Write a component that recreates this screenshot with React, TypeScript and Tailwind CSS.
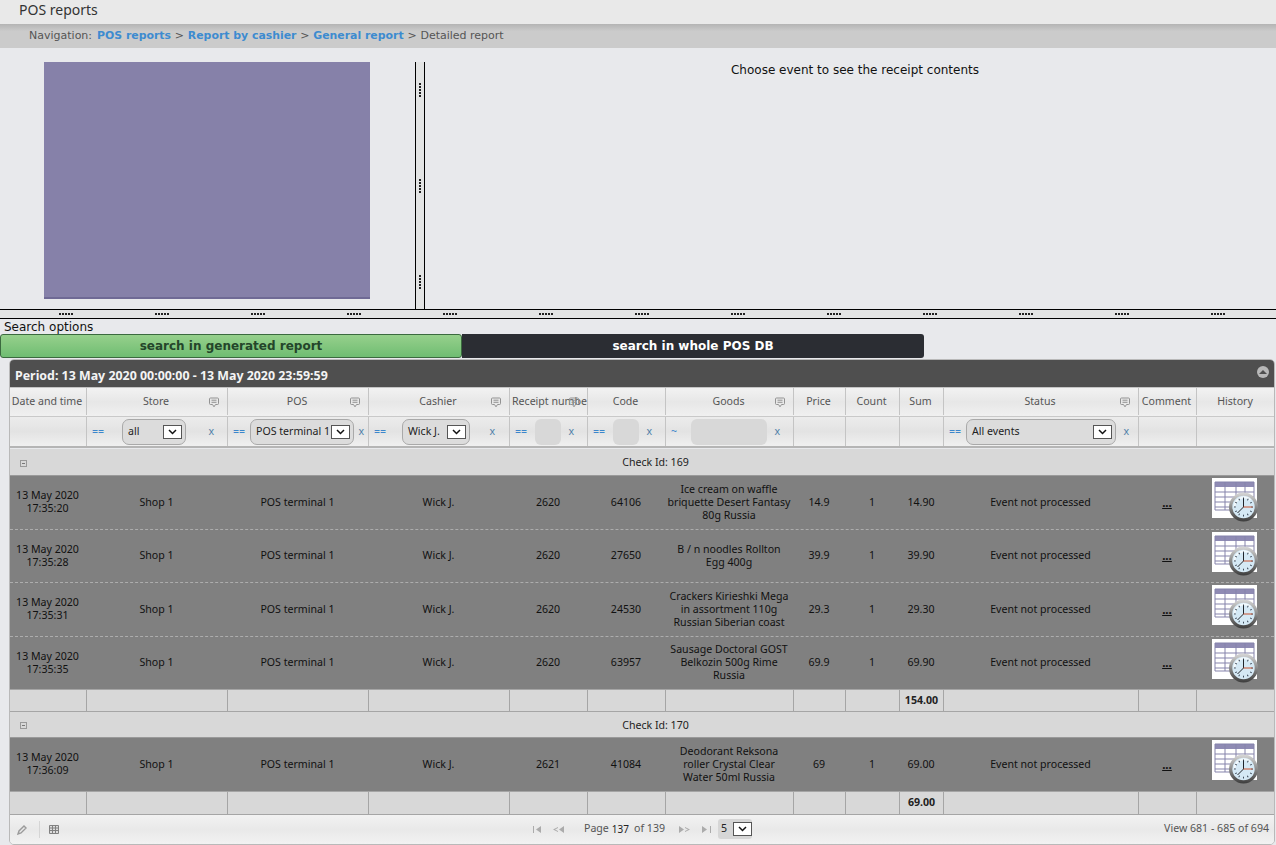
import type { ReactNode } from "react";

const gridCols =
  "grid grid-cols-[77px_141px_141px_141px_78px_78px_128px_52px_54px_44px_195px_58px_78px]";

const tableFont = "font-['Noto_Sans','DejaVu_Sans',sans-serif] text-[10.6px]";

const columns = [
  { title: "Date and time" },
  { title: "Store", note: true },
  { title: "POS", note: true },
  { title: "Cashier", note: true },
  { title: "Receipt number", note: true, clipped: true },
  { title: "Code" },
  { title: "Goods", note: true },
  { title: "Price" },
  { title: "Count" },
  { title: "Sum" },
  { title: "Status", note: true },
  { title: "Comment" },
  { title: "History" },
];

const checks = [
  {
    id: 169,
    total: "154.00",
    groupHeight: "h-[27px]",
    totalHeight: "h-[22px]",
    rows: [
      {
        time: "17:35:20",
        receipt: "2620",
        code: "64106",
        goods: ["Ice cream on waffle", "briquette Desert Fantasy", "80g Russia"],
        price: "14.9",
        sum: "14.90",
      },
      {
        time: "17:35:28",
        receipt: "2620",
        code: "27650",
        goods: ["B / n noodles Rollton", "Egg 400g"],
        price: "39.9",
        sum: "39.90",
      },
      {
        time: "17:35:31",
        receipt: "2620",
        code: "24530",
        goods: ["Crackers Kirieshki Mega", "in assortment 110g", "Russian Siberian coast"],
        price: "29.3",
        sum: "29.30",
      },
      {
        time: "17:35:35",
        receipt: "2620",
        code: "63957",
        goods: ["Sausage Doctoral GOST", "Belkozin 500g Rime", "Russia"],
        price: "69.9",
        sum: "69.90",
      },
    ],
  },
  {
    id: 170,
    total: "69.00",
    groupHeight: "h-[26px]",
    totalHeight: "h-[23px]",
    rows: [
      {
        time: "17:36:09",
        receipt: "2621",
        code: "41084",
        goods: ["Deodorant Reksona", "roller Crystal Clear", "Water 50ml Russia"],
        price: "69",
        sum: "69.00",
      },
    ],
  },
];

function NoteIcon() {
  return (
    <svg width="10" height="11" viewBox="0 0 10 11" fill="none" stroke="#929292" strokeWidth="1">
      <path d="M1.500 1h7a1 1 0 0 1 1 1v4.500a1 1 0 0 1-1 1H6.500L5 9.800 3.500 7.500h-2a1 1 0 0 1-1-1V2a1 1 0 0 1 1-1z" />
      <path d="M2.500 3.200h5M2.500 5.300h5" />
    </svg>
  );
}

function HistoryIcon() {
  const ticks = [0, 30, 60, 90, 120, 150, 180, 210, 240, 270, 300, 330];
  return (
    <svg width="48" height="44" viewBox="0 0 48 44">
      <defs>
        <linearGradient id="clockRing" x1="0" y1="0" x2="0" y2="1">
          <stop offset="0" stopColor="#d8d8d8" />
          <stop offset="1" stopColor="#3c3c3c" />
        </linearGradient>
      </defs>
      <rect x="0" y="0" width="45" height="40" fill="#ffffff" />
      <rect x="3" y="4" width="39" height="5" fill="#8f8bb4" />
      <path
        d="M3 4h39v28H3zM3 14h39M3 19h39M3 24h39M3 29h39M13 4v28M24 4v28M33 4v28"
        fill="none"
        stroke="#8583ab"
        strokeWidth="1"
      />
      <circle cx="31.500" cy="29" r="14.500" fill="url(#clockRing)" />
      <circle cx="31.500" cy="29" r="11.200" fill="#d5e9f5" />
      <path d="M22.500 29a9.500 9.500 0 0 1 16-7" fill="none" stroke="#ffffff" strokeWidth="2" opacity="0.7" />
      {ticks.map((a) => (
        <rect key={a} x="31.100" y="19.500" width="0.9" height="1.800" fill="#2e3a4a" transform={`rotate(${a} 31.500 29)`} />
      ))}
      <path d="M31.500 29V20.500M31.500 29l-6 6" stroke="#20242a" strokeWidth="1" fill="none" />
      <path d="M31.500 29h9" stroke="#c8502e" strokeWidth="1" fill="none" />
    </svg>
  );
}

function SelectBox() {
  return (
    <span className="flex h-[14px] w-[19px] shrink-0 items-center justify-center border border-[#555] bg-white">
      <svg width="9" height="6" viewBox="0 0 9 6" fill="none" stroke="#111" strokeWidth="1.500">
        <path d="M1 1l3.500 3.500L8 1" />
      </svg>
    </span>
  );
}

function Pill({ className, label }: { className: string; label: string }) {
  return (
    <span
      className={`flex h-[26px] items-center justify-between whitespace-nowrap rounded-[7px] border border-[#a9a9a9] bg-[#dcdcdc] pl-[5px] pr-[3px] text-[#222] ${className}`}
    >
      {label}
      <SelectBox />
    </span>
  );
}

function Blank({ className }: { className: string }) {
  return <span className={`h-[26px] rounded-[6px] bg-[#d8d8d8] ${className}`} />;
}

function FilterCell({ op = "==", gap, xRight, children }: { op?: string; gap: string; xRight: string; children: ReactNode }) {
  return (
    <div className="flex h-full items-center border-r border-[#c4c4c4] pl-[5px]">
      <span className="w-[11px] text-[#3c86cc]">{op}</span>
      <span className={`flex ${gap}`}>{children}</span>
      <span className={`ml-auto text-[#4f7fa8] ${xRight}`}>x</span>
    </div>
  );
}

function CollapseIcon() {
  return (
    <span className="flex h-[7px] w-[7px] items-center justify-center border border-[#999]">
      <span className="h-px w-[3px] bg-[#777]" />
    </span>
  );
}

function GroupRow({ id, height }: { id: number; height: string }) {
  return (
    <div className={`flex ${height} items-center border-b border-[#9a9a9a] bg-[#d8d8d8] pl-[10px] pt-[2px] text-[#222]`}>
      <CollapseIcon />
      <span className="flex-1 pl-[10px] text-center">Check Id: {id}</span>
    </div>
  );
}

function TotalRow({ total, height }: { total: string; height: string }) {
  return (
    <div className={`${gridCols} ${height} border-b border-[#a5a5a5] bg-[#d8d8d8]`}>
      {columns.map((c) => (
        <div
          key={c.title}
          className="flex items-center justify-center border-r border-[#a5a5a5] font-bold text-[#222] last:border-r-0"
        >
          {c.title === "Sum" ? total : ""}
        </div>
      ))}
    </div>
  );
}

function DataRow({
  row,
  lastRow,
}: {
  row: (typeof checks)[number]["rows"][number];
  lastRow: boolean;
}) {
  const cell = "flex items-center justify-center pr-[2px] text-center";
  const line = lastRow ? "border-solid border-[#a5a5a5]" : "border-dashed border-[#adadad]";
  return (
    <div className={`${gridCols} h-[53.5px] border-b ${line} bg-[#808080] leading-[13px] text-[#111]`}>
      <div className={cell}>
        13 May 2020
        <br />
        {row.time}
      </div>
      <div className={cell}>Shop 1</div>
      <div className={cell}>POS terminal 1</div>
      <div className={cell}>Wick J.</div>
      <div className={cell}>{row.receipt}</div>
      <div className={cell}>{row.code}</div>
      <div className="flex flex-col justify-center pr-[2px] text-center">
        {row.goods.map((text) => (
          <span key={text}>{text}</span>
        ))}
      </div>
      <div className={cell}>{row.price}</div>
      <div className={cell}>1</div>
      <div className={cell}>{row.sum}</div>
      <div className={cell}>Event not processed</div>
      <div className={`${cell} text-[11.5px] font-bold underline`}>...</div>
      <div className="pl-[15px] pt-[2px]">
        <HistoryIcon />
      </div>
    </div>
  );
}

function Dots({ vertical }: { vertical?: boolean }) {
  return (
    <span className={vertical ? "flex flex-col gap-px" : "flex gap-px"}>
      {[0, 1, 2, 3, 4].map((i) => (
        <span key={i} className="h-[2px] w-[2px] bg-[#222]" />
      ))}
    </span>
  );
}

export default function App() {
  return (
    <div className="h-[845px] w-[1276px] overflow-hidden bg-[#e8e9ec] font-['DejaVu_Sans',sans-serif] text-[11px]">
      <div className="h-[24px] bg-[#e9e9e9] pl-[19px] font-['Noto_Sans',sans-serif] text-[14px] leading-[19px] text-[#333]">
        POS reports
      </div>
      <div className="flex h-[24px] items-center gap-[3.8px] bg-gradient-to-b from-[#b4b4b4] to-[#cbcbcb] to-30% pl-[29px] text-[#555]">
        <span className="mr-[1.2px]">Navigation:</span>
        <span className="text-[10.9px] font-bold text-[#3d8bd0]">POS reports</span>
        <span>&gt;</span>
        <span className="text-[10.9px] font-bold text-[#3d8bd0]">Report by cashier</span>
        <span>&gt;</span>
        <span className="text-[10.9px] font-bold text-[#3d8bd0]">General report</span>
        <span>&gt;</span>
        <span>Detailed report</span>
      </div>

      <div className="flex h-[261px] pt-[14px]">
        <div className="w-[415px] pl-[44px]">
          <div className="h-[237px] w-[326px] border-b-2 border-[#6f6a95] bg-[#8681a9]" />
        </div>
        <div className="flex h-[247px] w-[10px] flex-col items-center gap-[82px] border-x border-black bg-[#e3e4e4] pt-[21px]">
          <Dots vertical />
          <Dots vertical />
          <Dots vertical />
        </div>
        <div className="flex-1 pl-[9px] pt-px text-center text-[12px] leading-[15px] text-[#111]">
          Choose event to see the receipt contents
        </div>
      </div>

      <div className="flex h-[10px] items-center border-y border-black bg-[#e3e4e4] pl-[18px]">
        {Array.from({ length: 13 }, (_, i) => (
          <span key={i} className="flex w-[96px] justify-center">
            <Dots />
          </span>
        ))}
      </div>

      <div className="h-[15px] pl-[4px] pt-px text-[12px] leading-[15px] text-[#111]">Search options</div>

      <div className="flex h-[24px] w-[924px] text-[12px] font-bold">
        <div className="flex w-[462px] items-center justify-center rounded-[3px] border border-[#3b6a3f] bg-gradient-to-b from-[#96d08c] to-[#6fbd72] text-[#24452a]">
          search in generated report
        </div>
        <div className="flex flex-1 items-center justify-center rounded-r-[3px] bg-[#2b2d33] text-white">
          search in whole POS DB
        </div>
      </div>

      <div className={`ml-[9px] mt-[1px] w-[1266px] overflow-hidden rounded-[5px] border border-[#b9b9b9] ${tableFont}`}>
        <div className="flex h-[27px] items-center justify-between bg-[#4f4f4f] pl-[5px] pr-[5px] text-[12.4px] font-bold text-[#f4f4f4]">
          <span className="pt-[5px]">Period: 13 May 2020 00:00:00 - 13 May 2020 23:59:59</span>
          <span className="mb-[3px] flex h-[12px] w-[12px] items-center justify-center rounded-full bg-[#b8b8b8]">
            <span className="border-x-[4px] border-b-[4px] border-x-transparent border-b-[#4f4f4f]" />
          </span>
        </div>

        <div className={`${gridCols} h-[29px] border-t border-[#c4c4c4] bg-gradient-to-b from-[#f2f2f2] via-[#e7e7e7] to-[#f0f0f0] pb-px text-[#555]`}>
          {columns.map((c) => (
            <div key={c.title} className="relative flex items-center justify-center overflow-hidden whitespace-nowrap border-r border-[#c4c4c4] pr-[2px] last:border-r-0">
              {c.clipped ? <span className="absolute left-[2px]">{c.title}</span> : c.title}
              {c.note && (
                <span className="absolute right-[8px] top-[9px]">
                  <NoteIcon />
                </span>
              )}
            </div>
          ))}
        </div>

        <div className={`${gridCols} h-[32px] border-y border-[#c9c9c9] border-b-[2px] border-b-[#b5b5b5] bg-gradient-to-b from-[#ececec] via-[#e3e3e3] to-[#f0f0f0]`}>
          <div className="border-r border-[#c4c4c4]" />
          <FilterCell gap="ml-[19px]" xRight="mr-[13px]">
            <Pill className="w-[64px]" label="all" />
          </FilterCell>
          <FilterCell gap="ml-[6px]" xRight="mr-[4px]">
            <Pill className="w-[104px]" label="POS terminal 1" />
          </FilterCell>
          <FilterCell gap="ml-[17px]" xRight="mr-[14px]">
            <Pill className="w-[68px]" label="Wick J." />
          </FilterCell>
          <FilterCell gap="ml-[9px]" xRight="mr-[13px]">
            <Blank className="w-[26px]" />
          </FilterCell>
          <FilterCell gap="ml-[9px]" xRight="mr-[13px]">
            <Blank className="w-[26px]" />
          </FilterCell>
          <FilterCell op="~" gap="ml-[9px]" xRight="mr-[13px]">
            <Blank className="w-[76px]" />
          </FilterCell>
          <div className="border-r border-[#c4c4c4]" />
          <div className="border-r border-[#c4c4c4]" />
          <div className="border-r border-[#c4c4c4]" />
          <FilterCell gap="ml-[6px]" xRight="mr-[9px]">
            <Pill className="w-[150px]" label="All events" />
          </FilterCell>
          <div className="border-r border-[#c4c4c4]" />
          <div />
        </div>

        <div className="mt-[1px]">
          {checks.map((check) => (
            <div key={check.id}>
              <GroupRow id={check.id} height={check.groupHeight} />
              {check.rows.map((row, i) => (
                <DataRow key={row.time} row={row} lastRow={i === check.rows.length - 1} />
              ))}
              <TotalRow total={check.total} height={check.totalHeight} />
            </div>
          ))}
        </div>

        <div className="flex h-[29px] items-center bg-gradient-to-b from-[#f2f2f2] via-[#e9e9e9] to-[#f2f2f2] text-[#555]">
          <span className="ml-[7px] flex w-[23px] border-r border-[#d5d5d5] py-[3px]">
            <svg width="11" height="11" viewBox="0 0 11 11" fill="none" stroke="#9a9a9a" strokeWidth="1.400">
              <path d="M1 10l1-3 5-5 2 2-5 5z" />
            </svg>
          </span>
          <span className="ml-[9px]">
            <svg width="10" height="9" viewBox="0 0 10 9" fill="#ddd" stroke="#808080" strokeWidth="1">
              <path d="M.5.5h9v8h-9zM.5 3h9M.5 5.500h9M3.500.5v8M6.500.5v8" />
            </svg>
          </span>
          <div className="ml-[474px] flex items-center">
            <svg width="32" height="7" viewBox="0 0 32 7" fill="#ababab">
              <path d="M0 0h1v7H0zM8 0v7L3 3.500zM20 3.500L25 1v1L22 3.500 25 5v1zM31 0v7L26 3.500z" />
            </svg>
            <span className="ml-[19px]">Page</span>
            <span className="ml-[3px] mr-[5px] text-[10px] text-[#222]">137</span>
            <span>of 139</span>
            <svg width="32" height="7" viewBox="0 0 32 7" fill="#ababab" className="ml-[14px]">
              <path d="M0 0l5 3.500L0 7zM6 1l5 2.500L6 6V5l3-1.500L6 2zM23 0l5 3.500-5 3.500zM31 0h1v7h-1z" />
            </svg>
            <span className="ml-[7px] flex h-[20px] w-[34px] items-center justify-between rounded-[3px] bg-[#d6d6d6] pl-[3px] text-[#222]">
              5
              <SelectBox />
            </span>
          </div>
          <span className="ml-auto mr-[5px]">View 681 - 685 of 694</span>
        </div>
      </div>
    </div>
  );
}
